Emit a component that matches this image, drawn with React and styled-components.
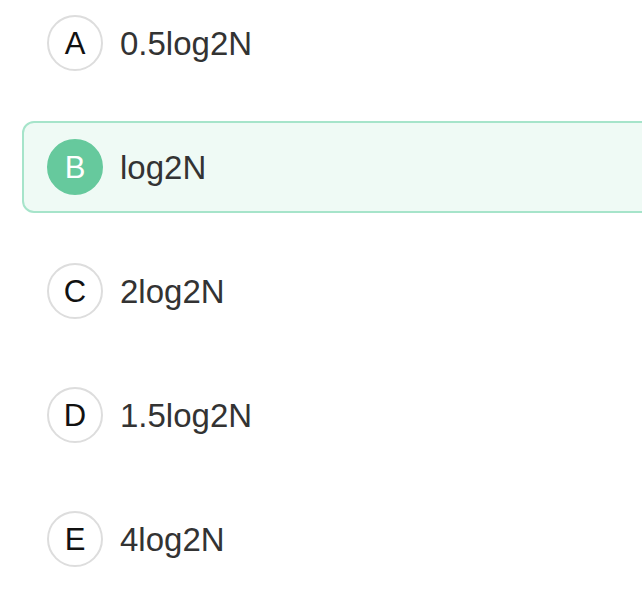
import React from 'react'
import styled, { createGlobalStyle } from 'styled-components'

const GlobalStyle = createGlobalStyle`
    html, body {
        margin: 0;
        padding: 0;
        background: #ffffff;
        overflow: hidden;
    }
    body {
        font-family: "Liberation Sans", Arial, Helvetica, sans-serif;
    }
`

const options = [
    { key: 'A', text: '0.5log2N' },
    { key: 'B', text: 'log2N', selected: true },
    { key: 'C', text: '2log2N' },
    { key: 'D', text: '1.5log2N' },
    { key: 'E', text: '4log2N' },
]

const App = () => {
    return (
        <>
            <GlobalStyle />
            <S.Frame>
                <S.List>
                    {options.map(option => (
                        <S.Option key={option.key} $selected={option.selected}>
                            <S.Badge $selected={option.selected}>{option.key}</S.Badge>
                            <S.Label>{option.text}</S.Label>
                        </S.Option>
                    ))}
                </S.List>
            </S.Frame>
        </>
    )
}

const S = {
    Frame: styled.div`
        width: 100%;
        height: 594px;
        overflow: hidden;
    `,
    List: styled.div`
        display: flex;
        flex-direction: column;
        gap: 32px;
        margin: -3px -20px 0 22px;
    `,
    Option: styled.div`
        display: flex;
        align-items: center;
        gap: 17px;
        box-sizing: border-box;
        height: 92px;
        padding: 0 23px;
        border: 2px solid ${({ $selected }) => ($selected ? '#a6e4ca' : 'transparent')};
        border-radius: 12px;
        background-color: ${({ $selected }) => ($selected ? '#effaf5' : 'transparent')};
    `,
    Badge: styled.div`
        display: flex;
        align-items: center;
        justify-content: center;
        box-sizing: border-box;
        width: 56px;
        height: 56px;
        flex-shrink: 0;
        border-radius: 50%;
        border: 2px solid ${({ $selected }) => ($selected ? '#66c99d' : '#dddddd')};
        background-color: ${({ $selected }) => ($selected ? '#66c99d' : '#ffffff')};
        color: ${({ $selected }) => ($selected ? '#ffffff' : '#111111')};
        font-size: 31px;
        line-height: 1;
    `,
    Label: styled.div`
        font-size: 33px;
        color: #333333;
        line-height: 1;
    `,
}

export default App
